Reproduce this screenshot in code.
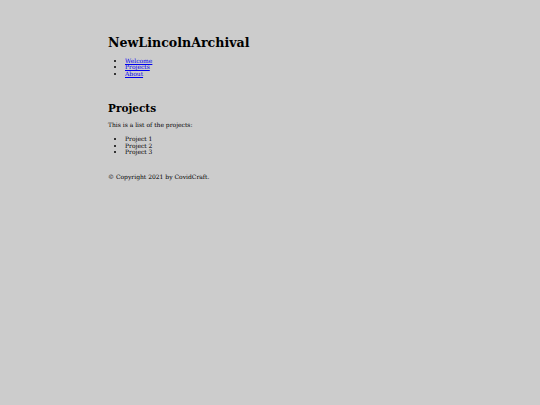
export default function App() {
  return (
    <div className="min-h-[405px] w-full bg-[#cccccc] text-black" style={{ fontFamily: '"DejaVu Serif", Georgia, serif' }}>
      <div className="pl-[108px] pt-[35px]">
        <h1 className="text-[12.6px] font-bold leading-[16px]">NewLincolnArchival</h1>
        <ul className="mt-[6.5px] list-disc pl-[17px] text-[6px] leading-[6.8px]">
          <li><a href="#" className="text-[#0000ee] underline">Welcome</a></li>
          <li><a href="#" className="text-[#0000ee] underline">Projects</a></li>
          <li><a href="#" className="text-[#0000ee] underline">About</a></li>
        </ul>
        <h2 className="mt-[24.5px] text-[10.5px] font-bold leading-[13px]">Projects</h2>
        <p className="mt-[5.5px] text-[6px] leading-[7px]">This is a list of the projects:</p>
        <ul className="mt-[8px] list-disc pl-[17px] text-[6px] leading-[6.8px]">
          <li>Project 1</li>
          <li>Project 2</li>
          <li>Project 3</li>
        </ul>
        <p className="mt-[16.5px] text-[6px] leading-[7px]">© Copyright 2021 by CovidCraft.</p>
      </div>
    </div>
  );
}
